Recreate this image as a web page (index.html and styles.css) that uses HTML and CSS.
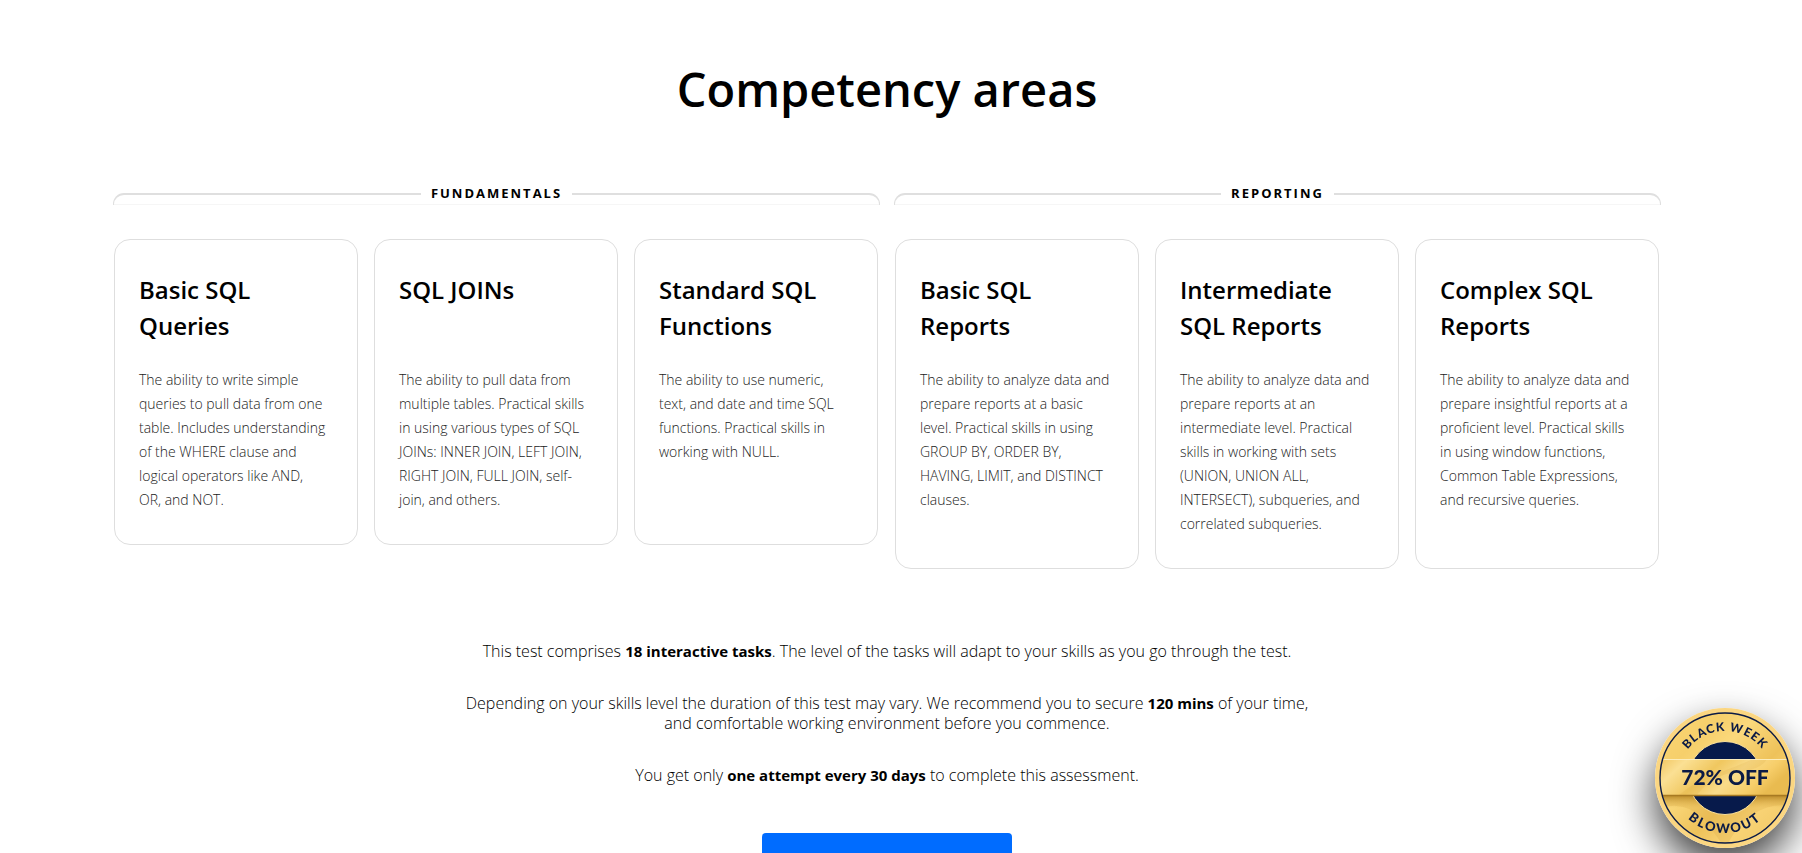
FILE: index.html
```html
<!DOCTYPE html>
<html lang="en">
<head>
<meta charset="utf-8">
<title>Competency areas</title>
<link rel="stylesheet" href="styles.css">
</head>
<body>
<main class="page">
  <h1 class="heading">Competency areas</h1>
  <div class="groups">
    <section class="group" aria-labelledby="g1">
      <header class="bracket">
        <span class="rail rail-left"></span>
        <h2 class="label" id="g1">FUNDAMENTALS</h2>
        <span class="rail rail-right"></span>
      </header>
      <div class="cards">
        <article class="card"><h3 class="card-title">Basic SQL Queries</h3><p class="card-text">The ability to write simple queries to pull data from one table. Includes understanding of the WHERE clause and logical operators like AND, OR,&nbsp;and NOT.</p></article>
        <article class="card"><h3 class="card-title">SQL JOINs</h3><p class="card-text">The ability to pull data from multiple tables. Practical skills in using various types of SQL JOINs: INNER JOIN, LEFT JOIN, RIGHT JOIN, FULL JOIN, self-join, and others.</p></article>
        <article class="card"><h3 class="card-title">Standard SQL Functions</h3><p class="card-text">The ability to use numeric, text, and date and time SQL functions. Practical skills in working with NULL.</p></article>
      </div>
    </section>
    <section class="group" aria-labelledby="g2">
      <header class="bracket">
        <span class="rail rail-left"></span>
        <h2 class="label" id="g2">REPORTING</h2>
        <span class="rail rail-right"></span>
      </header>
      <div class="cards">
        <article class="card"><h3 class="card-title">Basic SQL Reports</h3><p class="card-text">The ability to analyze data and prepare reports at a basic level. Practical skills in using GROUP BY, ORDER BY, HAVING, LIMIT, and DISTINCT clauses.</p></article>
        <article class="card"><h3 class="card-title">Intermediate SQL Reports</h3><p class="card-text">The ability to analyze data and prepare reports at an intermediate level. Practical skills in working with sets (UNION, UNION ALL, INTERSECT), subqueries, and correlated subqueries.</p></article>
        <article class="card"><h3 class="card-title">Complex SQL Reports</h3><p class="card-text">The ability to analyze data and prepare insightful reports at a proficient level. Practical skills in using window functions, Common Table Expressions, and recursive queries.</p></article>
      </div>
    </section>
  </div>
  <div class="notes">
    <p class="note">This test comprises <strong>18 interactive tasks</strong>. The level of the tasks will adapt to your skills as you go through the test.</p>
    <p class="note">Depending on your skills level the duration of this test may vary. We recommend you to secure <strong>120 mins</strong> of your time, and comfortable working environment before you commence.</p>
    <p class="note">You get only <strong>one attempt every 30 days</strong> to complete this assessment.</p>
  </div>
  <button class="start" type="button"></button>
</main>
<a class="badge" href="#">
  <svg class="badge-art" viewBox="0 0 140 140" role="img">
    <defs>
      <linearGradient id="gold" x1="0" y1="0" x2="1" y2="1">
        <stop offset="0" stop-color="#fbd674"/><stop offset=".25" stop-color="#f6cf6b"/><stop offset=".38" stop-color="#fbd97c"/><stop offset=".6" stop-color="#eec25a"/><stop offset=".75" stop-color="#f9d375"/><stop offset="1" stop-color="#eec561"/>
      </linearGradient>
      <linearGradient id="band" x1="0" y1="0" x2="1" y2=".3">
        <stop offset="0" stop-color="#f0c55f"/><stop offset=".2" stop-color="#fbe094"/><stop offset=".45" stop-color="#f0c75f"/><stop offset=".65" stop-color="#f9db8a"/><stop offset=".85" stop-color="#f7ce6a"/><stop offset="1" stop-color="#e9bb50"/>
      </linearGradient>
      <linearGradient id="fold" x1="0" y1="0" x2="0" y2="1">
        <stop offset="0" stop-color="#a87616" stop-opacity=".8"/><stop offset="1" stop-color="#d9a93f" stop-opacity="0"/>
      </linearGradient>
      <clipPath id="disc"><circle cx="70" cy="70" r="65"/></clipPath>
      <path id="arc-top" d="M23 70A47 47 0 0 1 117 70"/>
      <path id="arc-bottom" d="M15 70A55 55 0 0 0 125 70"/>
    </defs>
    <circle cx="70" cy="70" r="70" fill="#fbd681"/>
    <circle cx="70" cy="70" r="65" fill="url(#gold)"/>
    <g clip-path="url(#disc)">
      <path d="M70 140Q96 92 136 98V88H6V100Q30 92 50 112Z" fill="#d8a843" opacity=".25"/>
      <rect x="4" y="87" width="132" height="13" fill="url(#fold)"/>
      <circle cx="70" cy="70" r="36.5" fill="#071a4b" stroke="#fbe09a" stroke-width="1"/>
      <rect x="4" y="51" width="132" height="36" fill="url(#band)"/>
      <path d="M42 87Q58 66 82 64T112 51H98Q78 60 60 66T24 87Z" fill="#d8a73f" opacity=".18"/>
      <path d="M4 51.5H136" stroke="#fdedbb" stroke-width="1.2"/>
      <path d="M4 87.5H136" stroke="#a77a22" stroke-width="1.4"/>
    </g>
    <circle cx="70" cy="70" r="65" fill="none" stroke="#0b1a45" stroke-width="1.4"/>
    <g class="badge-words">
      <text class="curve-top"><textPath href="#arc-top" startOffset="50%">BLACK WEEK</textPath></text>
      <text class="offer" x="70" y="77">72% OFF</text>
      <text class="curve-bottom"><textPath href="#arc-bottom" startOffset="50%">BLOWOUT</textPath></text>
    </g>
  </svg>
</a>
</body>
</html>
```
FILE: styles.css
```css
* { box-sizing: border-box; }
html { overflow: hidden; }
body {
  margin: 0;
  background: #fff;
  color: #000;
  font: 300 16px/20px "Open Sans", "Noto Sans", sans-serif;
}
h1, h2, h3, p { margin: 0; }

.page {
  display: flex;
  flex-direction: column;
  align-items: center;
  padding: 57px 28px 32px 0;
}
.heading { font-size: 47px; line-height: 64px; font-weight: 600; }

.groups {
  display: grid;
  grid-template-columns: 1fr 1fr;
  align-items: start;
  gap: 14px;
  width: 100%;
  max-width: 1548px;
  margin-top: 62px;
}
.bracket {
  display: flex;
  height: 22px;
  border-bottom: 1px solid #f6f6f6;
}
.label {
  padding: 0 10px;
  font-size: 13px;
  line-height: 20px;
  font-weight: 700;
  letter-spacing: 2px;
}
.rail {
  flex: 1;
  height: 12px;
  margin-top: 10px;
  border: 0 solid #dfdfdf;
  border-top-width: 2px;
}
.rail-left { border-left-width: 1px; border-top-left-radius: 11px; }
.rail-right { border-right-width: 1px; border-top-right-radius: 11px; }

.cards {
  display: grid;
  grid-template-columns: repeat(3, 1fr);
  gap: 16px;
  margin-top: 34px;
  padding: 0 2px 0 1px;
}
.card {
  display: flex;
  flex-direction: column;
  gap: 24px;
  padding: 32px 24px;
  border: 1px solid #dedede;
  border-radius: 16px;
}
.card-title {
  min-height: 72px;
  font-size: 24px;
  line-height: 36px;
  font-weight: 600;
}
.card-text { color: #222; font-size: 14px; line-height: 24px; }

.notes {
  display: flex;
  flex-direction: column;
  gap: 32px;
  max-width: 860px;
  margin-top: 72px;
  text-align: center;
}
.note strong { font-size: 15px; font-weight: 700; }

.start {
  width: 250px;
  height: 60px;
  margin-top: 48px;
  border: 0;
  border-radius: 4px;
  background: #006cff;
}

.badge {
  position: fixed;
  right: 7px;
  bottom: 5px;
  width: 140px;
  height: 140px;
  border-radius: 50%;
  box-shadow: 0 20px 40px rgba(0, 0, 0, .75);
}
.badge-art { display: block; width: 100%; height: 100%; }
.badge-words { fill: #0b1a45; text-anchor: middle; font-family: Lato, sans-serif; font-weight: 900; }
.offer { font-size: 21px; }
.curve-top { font-size: 12px; letter-spacing: 1px; }
.curve-bottom { font-size: 13px; letter-spacing: 2px; }
```
